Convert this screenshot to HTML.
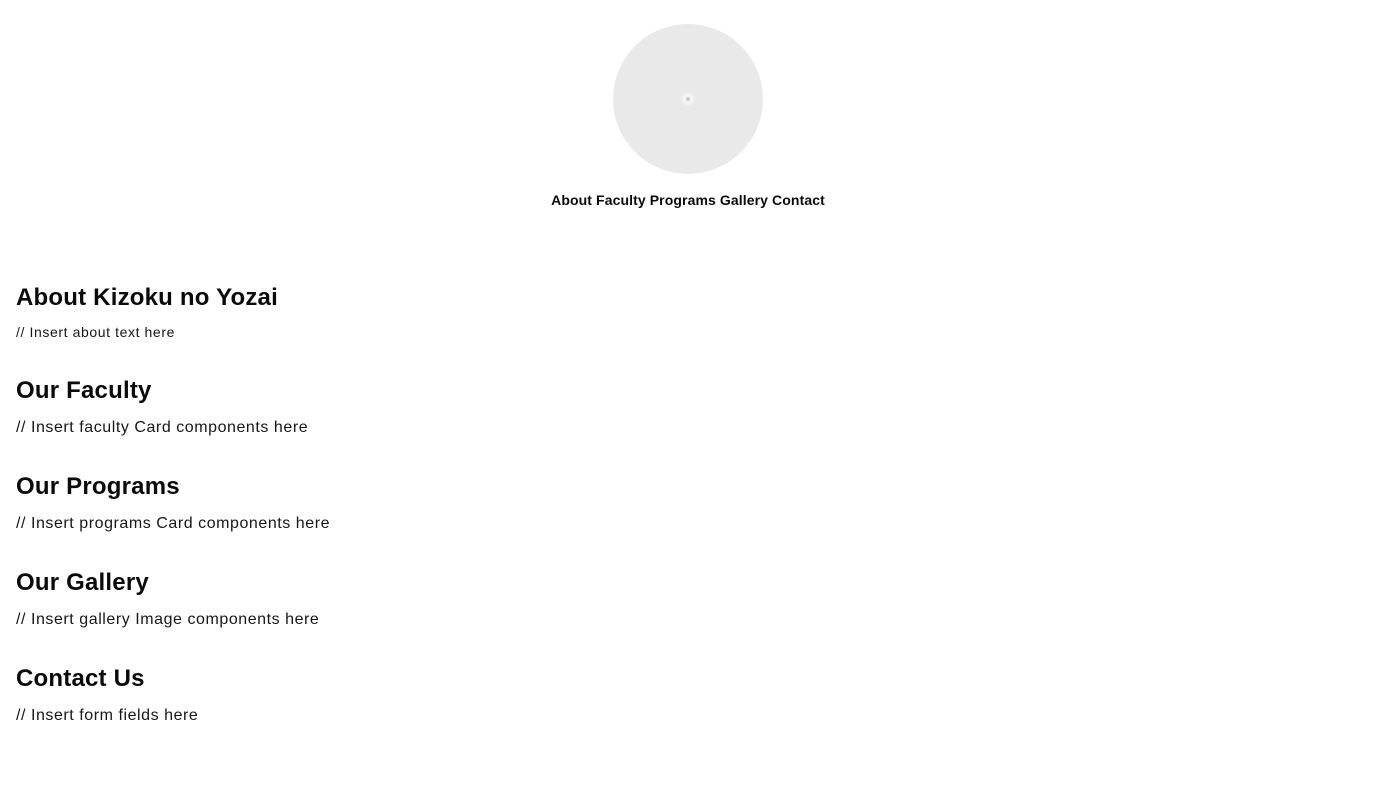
<!DOCTYPE html>
<html><head><meta charset="utf-8"><style>
html,body{margin:0;padding:0;background:#fff;width:1376px;height:790px;overflow:hidden;font-family:"Liberation Sans",sans-serif;color:#0a0a0a;}
.a{position:absolute;white-space:nowrap;}
h2{margin:0;font-size:24px;line-height:30px;font-weight:bold;letter-spacing:0.2px;}
.p{font-size:16px;line-height:20px;letter-spacing:0.55px;color:#171717;}
</style></head><body>
<div class="a" style="left:613px;top:24px;width:150px;height:150px;border-radius:50%;background:#e9e9e9;"></div>
<div class="a" style="left:682px;top:93px;width:12px;height:12px;border-radius:50%;background:#f4f4f4;"></div>
<div class="a" style="left:686px;top:97px;width:4px;height:4px;border-radius:50%;background:#ccc;"></div>
<div class="a" style="left:0;width:1376px;text-align:center;top:191px;font-size:14px;line-height:18px;font-weight:bold;letter-spacing:0.1px;">About Faculty Programs Gallery Contact</div>
<h2 class="a" style="left:16px;top:283px;">About Kizoku no Yozai</h2>
<div class="a" style="left:16px;top:324px;font-size:14px;line-height:16px;letter-spacing:0.6px;color:#171717;">// Insert about text here</div>
<h2 class="a" style="left:16px;top:376px;">Our Faculty</h2>
<div class="a p" style="left:16px;top:418px;">// Insert faculty Card components here</div>
<h2 class="a" style="left:16px;top:472px;">Our Programs</h2>
<div class="a p" style="left:16px;top:514px;">// Insert programs Card components here</div>
<h2 class="a" style="left:16px;top:568px;">Our Gallery</h2>
<div class="a p" style="left:16px;top:610px;">// Insert gallery Image components here</div>
<h2 class="a" style="left:16px;top:664px;">Contact Us</h2>
<div class="a p" style="left:16px;top:706px;">// Insert form fields here</div>
</body></html>
